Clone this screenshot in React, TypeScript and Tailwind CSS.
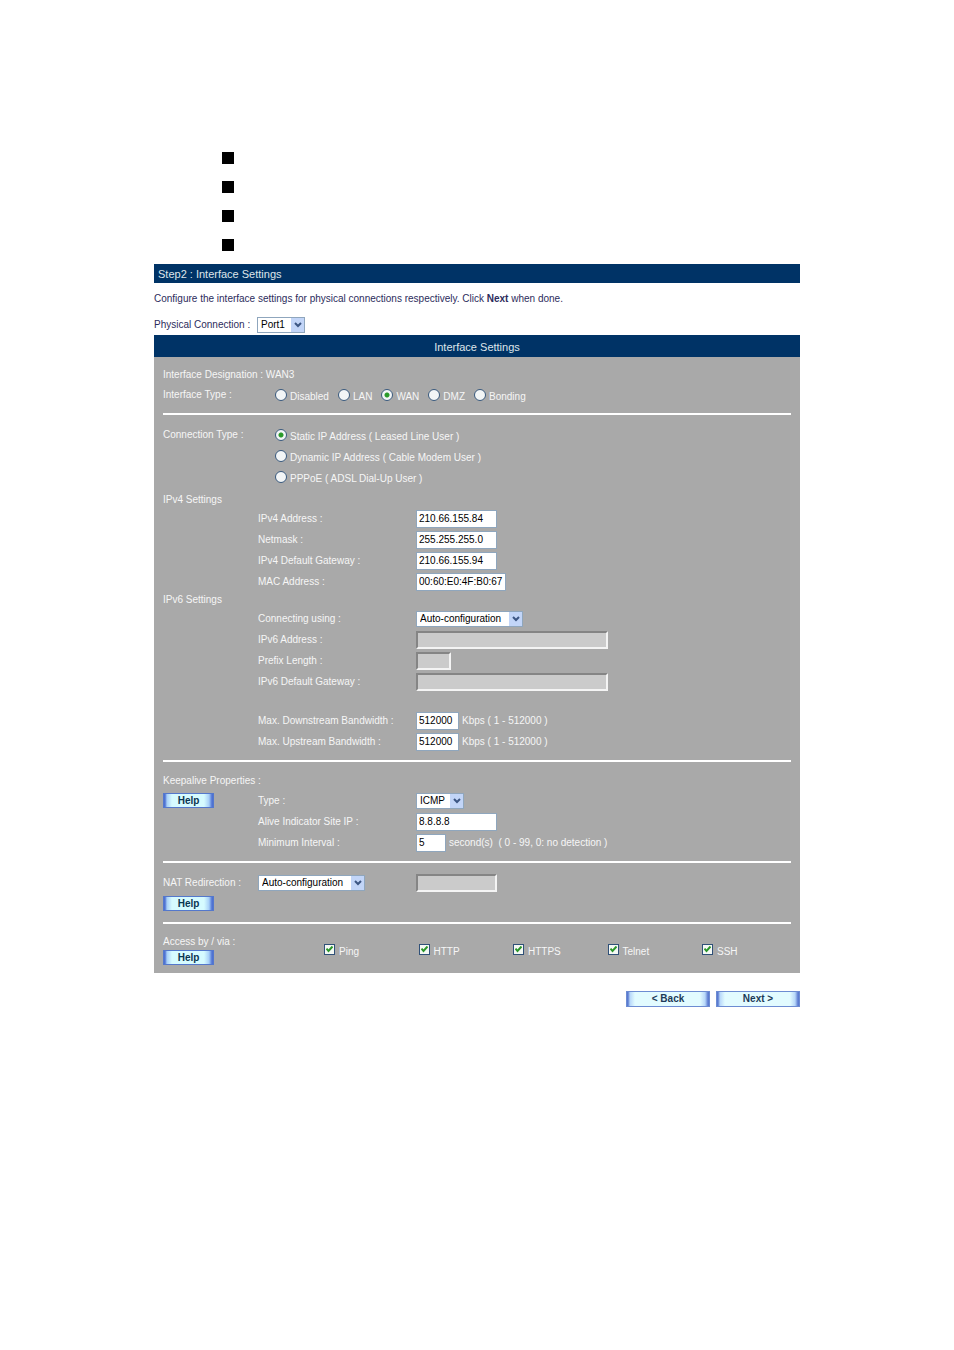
import type { ReactNode } from "react";

const interfaceTypes = ["Disabled", "LAN", "WAN", "DMZ", "Bonding"];

const connectionTypes = [
  "Static IP Address ( Leased Line User )",
  "Dynamic IP Address ( Cable Modem User )",
  "PPPoE ( ADSL Dial-Up User )",
];

const services = ["Ping", "HTTP", "HTTPS", "Telnet", "SSH"];

const ipv4Fields = [
  { id: "ipv4-address", label: "IPv4 Address :", value: "210.66.155.84", width: "w-[81px]" },
  { id: "netmask", label: "Netmask :", value: "255.255.255.0", width: "w-[81px]" },
  { id: "ipv4-gateway", label: "IPv4 Default Gateway :", value: "210.66.155.94", width: "w-[81px]" },
  { id: "mac-address", label: "MAC Address :", value: "00:60:E0:4F:B0:67", width: "w-[90px]" },
];

const ipv6Fields = [
  { id: "ipv6-address", label: "IPv6 Address :", width: "w-48" },
  { id: "prefix-length", label: "Prefix Length :", width: "w-[35px]" },
  { id: "ipv6-gateway", label: "IPv6 Default Gateway :", width: "w-48" },
];

const bandwidthFields = [
  { id: "max-down", label: "Max. Downstream Bandwidth :" },
  { id: "max-up", label: "Max. Upstream Bandwidth :" },
];

function Field({ id, value, width, disabled }: { id: string; value?: string; width: string; disabled?: boolean }) {
  return (
    <input
      id={id}
      type="text"
      defaultValue={value}
      disabled={disabled}
      className={`${width} h-[18px] border border-[#8fa6bd] bg-white px-[2px] text-black disabled:border-2 disabled:border-t-[#858585] disabled:border-l-[#858585] disabled:border-r-[#f4f4f4] disabled:border-b-[#f4f4f4] disabled:bg-[#cbcbcb]`}
    />
  );
}

function Dropdown({ id, options, width }: { id: string; options: string[]; width: string }) {
  return (
    <div className={`relative ${width}`}>
      <select id={id} className="block h-4 w-full appearance-none border border-[#8fa6bd] bg-white pl-[3px] leading-[14px] text-black">
        {options.map((option) => (
          <option key={option}>{option}</option>
        ))}
      </select>
      <span className="pointer-events-none absolute top-px right-px flex h-[14px] w-[13px] items-center justify-center bg-[#c2d5f8]">
        <svg viewBox="0 0 8 6" className="h-[6px] w-2" fill="none" stroke="#3c5684" strokeWidth="2">
          <path d="M1 1l3 3 3-3" />
        </svg>
      </span>
    </div>
  );
}

function Radio({ name, label, checked }: { name: string; label: string; checked: boolean }) {
  return (
    <label className="flex items-center gap-[3px]">
      <input
        type="radio"
        name={name}
        defaultChecked={checked}
        className="size-3 appearance-none rounded-full border border-[#38587c] bg-[#f2f5f6] checked:bg-[radial-gradient(circle,#2a9a2a_0,#2a9a2a_2px,#f2f5f6_3px)]"
      />
      <span className="pt-1">{label}</span>
    </label>
  );
}

function Row({ id, label, children }: { id: string; label: string; children: ReactNode }) {
  return (
    <div className="flex h-[21px] items-center pl-[95px]">
      <label htmlFor={id} className="w-[158px]">
        {label}
      </label>
      {children}
    </div>
  );
}

function Help() {
  return (
    <button
      type="button"
      className="h-[15px] w-[51px] border border-[#5478cc] bg-[linear-gradient(90deg,#4f72d2_1px,#a8d0f8_3px,#d6fbff_8px,#d6fbff_40px,#a8d0f8_45px,#4f72d2_48px)] leading-none font-bold text-[#0a3550]"
    >
      Help
    </button>
  );
}

function NavButton({ children }: { children: ReactNode }) {
  return (
    <button
      type="button"
      className="h-4 w-[84px] border border-[#6c8cd2] bg-[linear-gradient(90deg,#5b7bd0_1px,#b8d8fa_3px,#e2fbff_8px,#e2fbff_73px,#b8d8fa_78px,#5b7bd0_81px)] leading-none font-bold text-[#1c3a58]"
    >
      {children}
    </button>
  );
}

function Divider() {
  return <hr className="mt-2 mb-[9px] border-t-2 border-white" />;
}

export default function App() {
  return (
    <main className="min-h-screen bg-white px-[154px] pt-[143px] pb-10 font-['Liberation_Sans',Arial,sans-serif] text-[10px] leading-4 text-[#2c2c5c]">
      {/* Bullets */}
      <ul className="mb-[5px] pl-[68px]">
        {[1, 2, 3, 4].map((n) => (
          <li key={n} className="flex h-[29px] items-center">
            <span className="size-3 bg-black" />
          </li>
        ))}
      </ul>

      <h1 className="h-[19px] bg-[#003366] px-1 text-[11px] leading-5 text-[#dfe5ea]">Step2 : Interface Settings</h1>
      <p className="mt-2">
        Configure the interface settings for physical connections respectively. Click <b>Next</b> when done.
      </p>
      <div className="mt-2 flex h-5 items-center gap-[3px]">
        <label htmlFor="port" className="w-[100px]">
          Physical Connection :
        </label>
        <Dropdown id="port" options={["Port1", "Port2", "Port3"]} width="w-12" />
      </div>

      <h2 className="h-[22px] bg-[#003366] text-center text-[11px] leading-6 text-[#dfe5ea]">Interface Settings</h2>
      <form className="bg-[#a9a9a9] px-[9px] py-2 text-[#f6f6f6]">
        <div className="h-5 leading-5">Interface Designation : WAN3</div>
        <div className="flex h-5 items-center">
          <span className="w-28">Interface Type :</span>
          <div className="flex gap-[9px]">
            {interfaceTypes.map((type) => (
              <Radio key={type} name="interface-type" label={type} checked={type === "WAN"} />
            ))}
          </div>
        </div>
        <Divider />

        {/* Connection */}
        <div className="flex">
          <span className="w-28 leading-[21px]">Connection Type :</span>
          <div>
            {connectionTypes.map((type, i) => (
              <div key={type} className="flex h-[21px] items-center">
                <Radio name="connection-type" label={type} checked={i === 0} />
              </div>
            ))}
          </div>
        </div>
        <div className="mt-[5px]">IPv4 Settings</div>
        {ipv4Fields.map((f) => (
          <Row key={f.id} id={f.id} label={f.label}>
            <Field id={f.id} value={f.value} width={f.width} />
          </Row>
        ))}
        <div>IPv6 Settings</div>
        <Row id="ipv6-mode" label="Connecting using :">
          <Dropdown id="ipv6-mode" options={["Auto-configuration", "Static"]} width="w-[107px]" />
        </Row>
        {ipv6Fields.map((f) => (
          <Row key={f.id} id={f.id} label={f.label}>
            <Field id={f.id} width={f.width} disabled />
          </Row>
        ))}
        <div className="mt-[18px]">
          {bandwidthFields.map((f) => (
            <Row key={f.id} id={f.id} label={f.label}>
              <Field id={f.id} value="512000" width="w-[43px]" />
              <span className="pl-[3px]">Kbps ( 1 - 512000 )</span>
            </Row>
          ))}
        </div>
        <Divider />

        {/* Keepalive */}
        <div className="leading-[19px]">Keepalive Properties :</div>
        <div className="flex items-start">
          <div className="-mr-[51px] flex h-[21px] items-center">
            <Help />
          </div>
          <div className="flex-1">
            <Row id="keepalive-type" label="Type :">
              <Dropdown id="keepalive-type" options={["ICMP", "TCP"]} width="w-12" />
            </Row>
            <Row id="site-ip" label="Alive Indicator Site IP :">
              <Field id="site-ip" value="8.8.8.8" width="w-[81px]" />
            </Row>
            <Row id="min-interval" label="Minimum Interval :">
              <Field id="min-interval" value="5" width="w-[30px]" />
              <span className="pl-[3px]">second(s)&nbsp; ( 0 - 99, 0: no detection )</span>
            </Row>
          </div>
        </div>
        <Divider />

        {/* NAT */}
        <div className="flex h-[21px] items-center">
          <label htmlFor="nat-mode" className="w-[95px]">
            NAT Redirection :
          </label>
          <div className="w-[158px]">
            <Dropdown id="nat-mode" options={["Auto-configuration", "Disabled"]} width="w-[107px]" />
          </div>
          <input
            type="text"
            aria-label="NAT address"
            disabled
            className="h-[18px] w-[81px] border-2 border-t-[#858585] border-r-[#f4f4f4] border-b-[#f4f4f4] border-l-[#858585] bg-[#cbcbcb]"
          />
        </div>
        <div className="flex h-[21px] items-center">
          <Help />
        </div>
        <Divider />

        {/* Access */}
        <div className="flex items-center pt-px">
          <div className="flex w-[161px] flex-col items-start">
            <span>Access by / via :</span>
            <Help />
          </div>
          <div className="grid flex-1 grid-cols-[1fr_1fr_1fr_1fr_89px]">
            {services.map((service) => (
              <label key={service} className="flex items-center gap-1">
                <span className="relative flex">
                  <input type="checkbox" defaultChecked className="size-[11px] appearance-none border border-[#2f5078] bg-[#f4f8f4]" />
                  <svg viewBox="0 0 7 7" className="pointer-events-none absolute top-[2px] left-[2px] size-[7px]" fill="none" stroke="#2a962a" strokeWidth="2">
                    <path d="M0.5 2.5l2 2.5 4-4.5" />
                  </svg>
                </span>
                <span className="pt-1">{service}</span>
              </label>
            ))}
          </div>
        </div>
      </form>

      <div className="mt-[18px] flex justify-end gap-[6px]">
        <NavButton>&lt; Back</NavButton>
        <NavButton>Next &gt;</NavButton>
      </div>
    </main>
  );
}
